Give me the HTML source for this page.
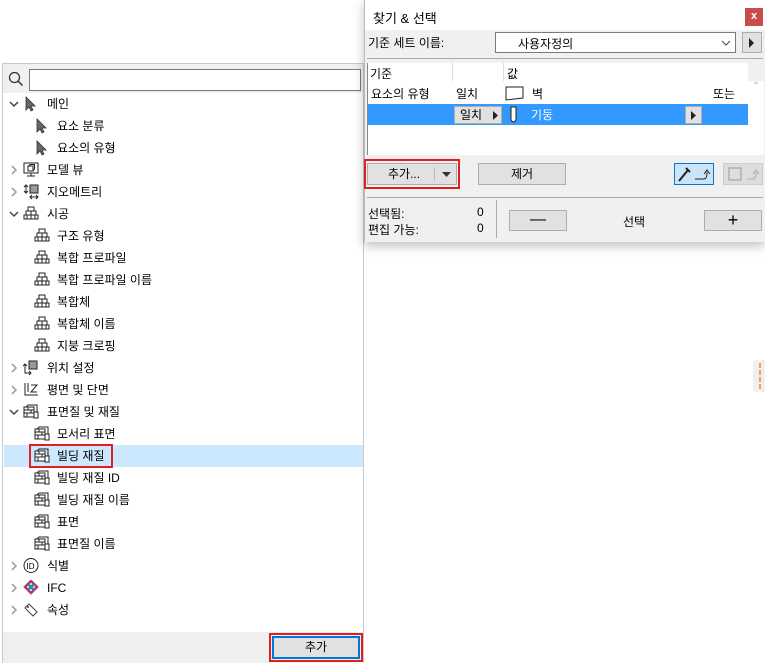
<!DOCTYPE html>
<html><head><meta charset="utf-8"><style>
*{margin:0;padding:0;box-sizing:border-box}
body{width:765px;height:663px;background:#fff;position:relative;overflow:hidden;font-family:"Liberation Sans","Noto Sans CJK KR",sans-serif;font-size:12px;color:#000}
.a{position:absolute}
.lp{left:2px;top:63px;width:362px;height:600px;border:1px solid #c8c8c8;background:#fff}
.row{position:absolute;left:1px;width:359px;height:22px;line-height:22px}
.row span{position:absolute}
.chev{position:absolute;left:8px;top:0;color:#555;font-size:11px}
.ic{position:absolute;top:4px;width:16px;height:14px}
.btn{position:absolute;background:#e1e1e1;border:1px solid #adadad;text-align:center;font-size:12px}
</style></head><body>
<div class="a lp">
 <div class="a" style="left:0;top:0;width:360px;height:29px;background:#f0f0f0"></div>
 <svg class="a" style="left:5px;top:7px" width="16" height="16"><circle cx="6.5" cy="6.5" r="5" fill="none" stroke="#333" stroke-width="1.3"/><line x1="10" y1="10" x2="14.5" y2="14.5" stroke="#333" stroke-width="1.5"/></svg>
 <div class="a" style="left:26px;top:5px;width:332px;height:22px;border:1px solid #7a7a7a;background:#fff"></div>
 <div class="row" style="top:381px;background:#cce8ff"></div>
 <div class="a" style="left:26px;top:380px;width:84px;height:24px;border:2px solid #e02020"></div>
 <div class="a" style="left:0;top:568px;width:360px;height:31px;background:#f0f0f0"></div>
 <div class="a" style="left:266px;top:569px;width:94px;height:29px;border:2px solid #e02020"></div>
 <div class="btn" style="left:269px;top:572px;width:88px;height:23px;border:2px solid #0078d7;line-height:19px">추가</div>
</div>
<!-- tree rows -->
<div id="tree"></div>
<script>
var rows=[
[0,'v','cur','메인'],[1,'','cur','요소 분류'],[1,'','cur','요소의 유형'],
[0,'>','mon','모델 뷰'],[0,'>','geo','지오메트리'],[0,'v','brick','시공'],
[1,'','brick','구조 유형'],[1,'','brick','복합 프로파일'],[1,'','brick','복합 프로파일 이름'],[1,'','brick','복합체'],[1,'','brick','복합체 이름'],[1,'','brick','지붕 크로핑'],
[0,'>','pos','위치 설정'],[0,'>','pln','평면 및 단면'],[0,'v','sur','표면질 및 재질'],
[1,'','sur','모서리 표면'],[1,'','sur','빌딩 재질'],[1,'','sur','빌딩 재질 ID'],[1,'','sur','빌딩 재질 이름'],[1,'','sur','표면'],[1,'','sur','표면질 이름'],
[0,'>','id','식별'],[0,'>','ifc','IFC'],[0,'>','tag','속성']];
var ic={
cur:'<path d="M3 1 L3 14 L6 11 L8 15 L10 14 L8 10 L12 10 Z" fill="#666" stroke="#333" stroke-width="0.8"/>',
mon:'<rect x="1" y="1" width="14" height="10" fill="none" stroke="#222"/><rect x="5" y="4" width="5" height="5" fill="none" stroke="#222"/><path d="M6 4 L7 2.5 L11.5 2.5 L11.5 7 L10 8.5" fill="none" stroke="#222"/><line x1="8" y1="11" x2="8" y2="14" stroke="#222"/><line x1="4" y1="14" x2="12" y2="14" stroke="#222"/>',
geo:'<path d="M3 1 V9 M1 3 L3 1 L5 3 M1 7 L3 9 L5 7" fill="none" stroke="#222"/><rect x="7" y="1" width="8" height="8" fill="#999" stroke="#222"/><path d="M7 13 H15 M9 11 L7 13 L9 15 M13 11 L15 13 L13 15" fill="none" stroke="#222"/>',
brick:'<path d="M1 13 H15 V9 H1 Z M3 9 V5 H13 V9 M5 5 V1 H11 V5 M8 9 V13 M5 9 M8 5 V9 M4 13 M12 9 V13 M4 9 V13" fill="none" stroke="#222"/>',
pos:'<path d="M2 4 V13 H8 M0 6 L2 4 L4 6 M6 11 L8 13 L6 15" fill="none" stroke="#222"/><rect x="6" y="1" width="8" height="8" fill="#999" stroke="#222"/>',
pln:'<path d="M2 1 V13 H15 M5 1 V10 M8 3 L14 3 L8 10 L14 10" fill="none" stroke="#222"/>',
sur:'<rect x="1" y="3" width="10" height="10" fill="#fff" stroke="#222"/><path d="M1 6 H11 M1 9 H11 M5 3 V6 M8 6 V9 M4 9 V13 M3 3 L5 1 H14 V10 L11 13" fill="none" stroke="#222"/><rect x="11" y="8" width="4" height="6" fill="#fff" stroke="#222"/>',
id:'<circle cx="8" cy="7.5" r="7" fill="#fff" stroke="#222"/><text x="3.5" y="11" font-size="8" font-family="Liberation Sans">ID</text>',
ifc:'<path d="M8 1 L14 7 L8 13 L2 7 Z" fill="none" stroke="#c0306a" stroke-width="2.5"/><path d="M5 4 L11 10 M11 4 L5 10" stroke="#2a8aa0" stroke-width="2.5"/>',
tag:'<path d="M2 6 L6 2 L14 10 L10 14 Z" fill="none" stroke="#444"/><circle cx="5" cy="5" r="1" fill="#444"/>'
};
var h='';
rows.forEach(function(r,i){
 var top=93+i*22, lvl=r[0];
 var ix=lvl?34:23, tx=lvl?57:47;
 h+='<div class="a" style="left:0;top:'+top+'px;width:360px;height:22px;line-height:22px">';
 if(r[1]=='v')h+='<svg class="a" style="left:9px;top:8px" width="10" height="7"><path d="M1 1 L5 5 L9 1" fill="none" stroke="#444" stroke-width="1.5"/></svg>';
 if(r[1]=='>')h+='<svg class="a" style="left:11px;top:6px" width="7" height="10"><path d="M1 1 L5 5 L1 9" fill="none" stroke="#999" stroke-width="1.5"/></svg>';
 h+='<svg class="a" style="left:'+ix+'px;top:3px" width="16" height="16">'+ic[r[2]]+'</svg>';
 h+='<span class="a" style="left:'+tx+'px;top:0">'+r[3]+'</span></div>';
});
document.getElementById('tree').innerHTML=h;
</script>
<!-- right dialog -->
<div class="a" style="left:364px;top:0;width:401px;height:242px;background:#f0f0f0;border-left:1px solid #bbb;box-shadow:0 4px 10px rgba(0,0,0,0.25)">
 <div class="a" style="left:0;top:0;width:400px;height:30px;background:#fff"></div>
 <div class="a" style="left:8px;top:8px;font-size:13px">찾기 &amp; 선택</div>
 <div class="a" style="left:380px;top:8px;width:18px;height:18px;background:#c84c4c;color:#fff;text-align:center;line-height:17px;font-size:11px;font-weight:bold">x</div>
 <div class="a" style="left:3px;top:34px">기준 세트 이름:</div>
 <div class="a" style="left:130px;top:32px;width:241px;height:21px;border:1px solid #7a7a7a;background:#fff"><span class="a" style="left:22px;top:2px">사용자정의</span><svg class="a" style="left:225px;top:7px" width="10" height="7"><path d="M1 1 L5 5 L9 1" fill="none" stroke="#444"/></svg></div>
 <div class="btn" style="left:377px;top:32px;width:20px;height:21px"><svg width="8" height="10" style="margin-top:5px"><path d="M1 0 L6 5 L1 10Z" fill="#222"/></svg></div>
 <div class="a" style="left:2px;top:58px;width:396px;height:1px;background:#aaa"></div>
 <div class="a" style="left:2px;top:63px;width:381px;height:92px;background:#fff;border-left:1px solid #888"></div>
 <div class="a" style="left:383px;top:81px;width:16px;height:74px;background:#fff;color:#bbb;font-size:10px;text-align:center">⌃</div>
 <div class="a" style="left:87px;top:63px;width:1px;height:18px;background:#ddd"></div>
 <div class="a" style="left:138px;top:63px;width:1px;height:18px;background:#ddd"></div>
 <div class="a" style="left:5px;top:65px">기준</div>
 <div class="a" style="left:142px;top:65px">값</div>
 <div class="a" style="left:6px;top:85px">요소의 유형</div>
 <div class="a" style="left:91px;top:85px">일치</div>
 <svg class="a" style="left:140px;top:86px" width="20" height="15"><path d="M1 1 L18 1 L18 12 L1 14 Z" fill="none" stroke="#222"/></svg>
 <div class="a" style="left:167px;top:85px">벽</div>
 <div class="a" style="left:348px;top:85px">또는</div>
 <div class="a" style="left:3px;top:104px;width:380px;height:21px;background:#3399ff"></div>
 <div class="btn" style="left:89px;top:106px;width:48px;height:18px;line-height:16px;text-align:left;padding-left:5px">일치<svg class="a" style="left:38px;top:4px" width="6" height="9"><path d="M0 0 L5 4.5 L0 9Z" fill="#222"/></svg></div>
 <svg class="a" style="left:145px;top:106px" width="8" height="18"><path d="M1 1 H6 V14 Q3.5 18 1 14 Z" fill="#fff" stroke="#222"/></svg>
 <div class="a" style="left:166px;top:106px;color:#fff">기둥</div>
 <div class="btn" style="left:320px;top:106px;width:17px;height:18px"><svg width="6" height="9" style="margin-top:4px"><path d="M0 0 L5 4.5 L0 9Z" fill="#222"/></svg></div>
 <div class="a" style="left:-1px;top:159px;width:96px;height:30px;border:2px solid #e02020"></div>
 <div class="btn" style="left:2px;top:163px;width:90px;height:22px;line-height:20px;text-align:left;padding-left:20px">추가...<span class="a" style="left:66px;top:3px;width:1px;height:14px;background:#bbb"></span><svg class="a" style="left:74px;top:8px" width="9" height="5"><path d="M0 0 H9 L4.5 5Z" fill="#333"/></svg></div>
 <div class="btn" style="left:113px;top:163px;width:88px;height:22px;line-height:20px">제거</div>
 <div class="a" style="left:309px;top:163px;width:40px;height:22px;background:#cce4f7;border:1px solid #0078d7"><svg width="38" height="20"><path d="M4 17 L13 6 M11 4 L15 8" stroke="#222" stroke-width="2" fill="none"/><path d="M20 15 H29 Q32 15 32 8 M29 10 L32 6 L35 10" fill="none" stroke="#222"/></svg></div>
 <div class="a" style="left:358px;top:163px;width:40px;height:22px;background:#ddd;border:1px solid #ccc"><svg width="38" height="20"><rect x="5" y="4" width="12" height="12" fill="none" stroke="#999"/><path d="M23 15 H29 Q32 15 32 8 M29 10 L32 6 L35 10" fill="none" stroke="#aaa"/></svg></div>
 <div class="a" style="left:2px;top:197px;width:396px;height:1px;background:#aaa"></div>
 <div class="a" style="left:3px;top:205px">선택됨:</div><div class="a" style="left:112px;top:205px">0</div>
 <div class="a" style="left:3px;top:221px">편집 가능:</div><div class="a" style="left:112px;top:221px">0</div>
 <div class="a" style="left:131px;top:200px;width:1px;height:38px;background:#aaa"></div>
 <div class="btn" style="left:144px;top:210px;width:58px;height:21px;line-height:18px;font-size:16px">—</div>
 <div class="a" style="left:258px;top:213px">선택</div>
 <div class="btn" style="left:339px;top:210px;width:58px;height:21px;line-height:18px;font-size:18px">+</div>
</div>
<div class="a" style="left:753px;top:360px;width:12px;height:32px;background:#f0f0f0;border-radius:3px 0 0 3px"></div>
<div class="a" style="left:759px;top:363px;width:2px;height:26px;background:repeating-linear-gradient(#f5a04a 0 5px,transparent 5px 7px)"></div>
</body></html>
